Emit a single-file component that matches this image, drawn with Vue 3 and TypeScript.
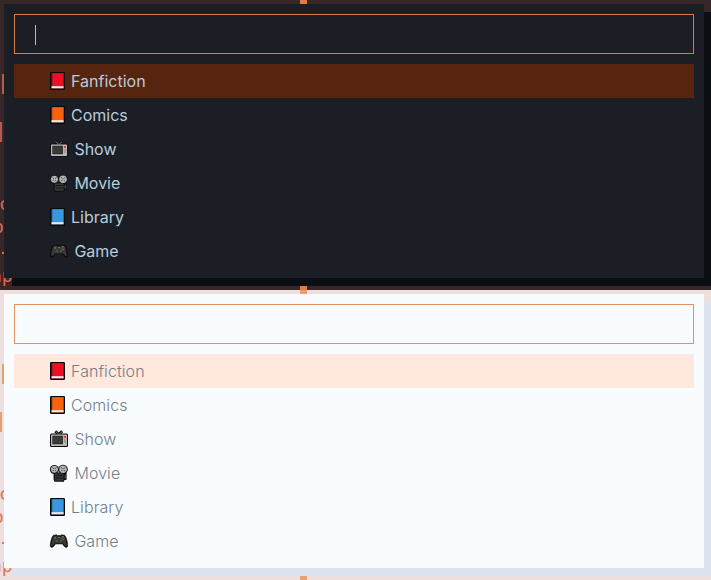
<script setup lang="ts">
type IconName = 'book' | 'tv' | 'camera' | 'gamepad'

interface Choice {
  label: string
  icon: IconName
  tone?: string
}

const themes: string[] = ['dark', 'light']

const choices: Choice[] = [
  { label: 'Fanfiction', icon: 'book', tone: '#e81224' },
  { label: 'Comics', icon: 'book', tone: '#f7630c' },
  { label: 'Show', icon: 'tv' },
  { label: 'Movie', icon: 'camera' },
  { label: 'Library', icon: 'book', tone: '#3a96dd' },
  { label: 'Game', icon: 'gamepad' },
]
</script>

<template>
  <main class="page">
    <section v-for="theme in themes" :key="theme" class="scene" :class="theme">
      <i class="handle top"></i>
      <i class="handle bottom"></i>
      <i class="bar first"></i>
      <i class="bar second"></i>
      <span class="behind c">c</span>
      <span class="behind o">o</span>
      <i class="dot"></i>
      <div class="panel">
        <div class="search"><i v-if="theme === 'dark'" class="caret"></i></div>
        <ul class="list">
          <li v-for="(choice, i) in choices" :key="choice.label" class="item" :class="{ selected: i === 0 }">
            <svg v-if="choice.icon === 'book'" class="icon book" width="18" height="20" viewBox="0 0 18 20">
              <rect x="1" y="1" width="15" height="18" rx="1.3" fill="#080808" />
              <path d="M2.600 2.100H14.700V17.400H2.600z" :fill="choice.tone" />
              <path d="M3 2.100v13" stroke="#000" stroke-opacity=".3" stroke-width=".9" />
              <path d="M2.500 15.200h12v2.200h-12z" fill="#f5eded" />
              <path d="M2.500 17.400h12" stroke="#000" stroke-opacity=".3" stroke-width=".8" />
            </svg>
            <svg v-else-if="choice.icon === 'tv'" class="icon" width="20" height="20" viewBox="0 0 20 20">
              <path class="outline" d="M6.200 2.300l3.500 3 3.500-3" fill="none" stroke-width="2.700" />
              <rect class="halo" x="1" y="4.400" width="18" height="13.600" rx="1.500" />
              <path d="M6.500 2.500l3.300 2.700M13.200 2.500l-2.900 2.700" stroke="#777" stroke-width="1" />
              <rect x="2" y="5.400" width="16" height="11.500" rx=".6" fill="#b9b6b4" />
              <rect x="3.400" y="6.800" width="10.400" height="8.400" fill="#171717" />
              <rect x="4" y="7.400" width="9.200" height="7.200" fill="#3b3a39" />
              <path d="M15 7h2v2h-2z" fill="#f03a2c" />
              <path d="M15 11h2M15 13h2" stroke="#777" stroke-width=".8" />
            </svg>
            <svg v-else-if="choice.icon === 'camera'" class="icon" width="20" height="20" viewBox="0 0 20 20">
              <g class="halo">
                <circle cx="5.400" cy="6.500" r="4.500" />
                <circle cx="14" cy="6.500" r="4.800" />
                <path d="M4.600 9.500h13v7.300l-2.200.2-.4 1.800H5.600L4.600 17z" />
              </g>
              <circle cx="5.400" cy="6.300" r="3.500" fill="#b4b4b4" />
              <circle cx="14" cy="6.300" r="3.800" fill="#b4b4b4" />
              <path d="M3.500 4.500l3.800 3.600M7.200 4.500L3.600 8.100M12 4.300l4 4M16 4.300l-4 4" stroke="#414141" stroke-width="1" />
              <circle cx="5.400" cy="6.300" r=".8" fill="#ddd" />
              <circle cx="14" cy="6.300" r=".8" fill="#ddd" />
              <rect x="5.800" y="10.500" width="8.700" height="7.200" fill="#393939" />
              <path d="M6.500 12.500h7.500M6.500 15h7.500" stroke="#111" stroke-width=".9" />
              <path d="M15.500 12.500l1.500-.8v4l-1.500-.6z" fill="#474747" />
            </svg>
            <svg v-else class="icon" width="20" height="20" viewBox="0 0 20 20">
              <path class="pad" d="M4.500 4.200l3-.4 1 .8h3l1-.8 3 .4c1.400.7 3.400 7 3.200 10.800-.5 2.500-3.300 1.500-5.100-2H6.400c-1.800 3.500-4.600 4.500-5.100 2C1.100 11.200 3.100 4.900 4.500 4.200z" />
              <path d="M4.900 4.900l2.500-.3 1 .8h3.200l1-.8 2.500.3c1 1 2.700 6.200 2.700 9.500-.5 1.600-2.100.3-3.600-2H5.800c-1.500 2.300-3.100 3.600-3.600 2 0-3.300 1.700-8.500 2.700-9.500z" fill="#383838" />
              <circle cx="6" cy="7" r="1.100" fill="#666" />
              <circle cx="8" cy="10" r="1" fill="#5a5a5a" />
              <circle cx="12" cy="10" r="1" fill="#5a5a5a" />
              <path d="M9.500 6.500h1" stroke="#aaa" />
              <circle cx="14" cy="5.800" r=".7" fill="#b59a16" />
              <circle cx="12.700" cy="7.100" r=".65" fill="#397eb5" />
              <circle cx="15.200" cy="7.100" r=".65" fill="#b93b36" />
              <circle cx="14" cy="8.400" r=".65" fill="#58a536" />
            </svg>
            <span class="label">{{ choice.label }}</span>
          </li>
        </ul>
      </div>
      <span class="behind ap">ap</span>
    </section>
  </main>
</template>

<style>
body { margin: 0; }
</style>

<style scoped>
.page {
  width: 711px;
  height: 580px;
  overflow: hidden;
  font-family: Inter, "Liberation Sans", sans-serif;
}
.scene {
  position: relative;
  box-sizing: border-box;
  height: 290px;
  padding: 4px 7px 12px 4px;
  overflow: hidden;
  background: var(--frame);
}
.dark {
  --frame: #382728;
  --surface: #1b1e25;
  --shadow: #0b0e12;
  --accent: #dc7c45;
  --selected: #572410;
  --text: #b7cddd;
  --mark: #df694b;
  --bar: #b95b48;
  --handle: #e17d42;
  --halo: #101114;
}
.light {
  --frame: #eddfde;
  --surface: #f9fcff;
  --shadow: #dce3ef;
  --accent: #df935f;
  --selected: #ffe9df;
  --text: #747e86;
  --mark: #df735b;
  --bar: #e5a16f;
  --handle: #e6a076;
  --halo: #090909;
}
.panel {
  position: relative;
  box-sizing: border-box;
  height: 274px;
  padding: 10px;
  background: var(--surface);
  box-shadow: 8px 8px 0 var(--shadow);
}
.search {
  box-sizing: border-box;
  display: flex;
  align-items: center;
  height: 40px;
  padding: 2px 0 0 20px;
  border: 1px solid var(--accent);
}
.caret {
  width: 1px;
  height: 20px;
  background: #b8b8d2;
}
.list {
  margin: 10px 0 0;
  padding: 0;
  list-style: none;
}
.item {
  box-sizing: border-box;
  display: flex;
  align-items: center;
  height: 34px;
  padding-left: 35px;
  color: var(--text);
  font-size: 16px;
  line-height: 34px;
}
.selected { background: var(--selected); }
.icon {
  flex: none;
  margin-right: 5.4px;
}
.book { margin-right: 4px; }
.halo { fill: var(--halo); }
.outline { stroke: var(--halo); }
.pad {
  fill: #090909;
  stroke: var(--halo);
  stroke-width: .5;
}
.light .label {
  font-weight: 350;
  letter-spacing: .08px;
}
.behind {
  position: absolute;
  color: var(--mark);
  font: 18px/20px "DejaVu Sans Mono", monospace;
}
.c {
  left: -1px;
  top: 194px;
}
.o {
  left: -7px;
  top: 217px;
}
.dot {
  position: absolute;
  left: 2px;
  top: 252px;
  width: 2px;
  height: 2px;
  background: var(--mark);
}
/* Only the part of the word outside the panel's lower-left corner shows. */
.ap {
  left: -9px;
  top: 266px;
  clip-path: polygon(0 0, 13px 0, 13px 12px, 22px 12px, 22px 20px, 0 20px);
}
.bar {
  position: absolute;
  left: 0;
  background: var(--bar);
}
.first {
  left: 2px;
  top: 74px;
  width: 2px;
  height: 20px;
}
.second {
  top: 122px;
  width: 2px;
  height: 20px;
}
.handle {
  position: absolute;
  left: 300px;
  width: 7px;
  height: 4px;
  background: var(--handle);
}
.top { top: 0; }
.bottom { bottom: 0; }
</style>
